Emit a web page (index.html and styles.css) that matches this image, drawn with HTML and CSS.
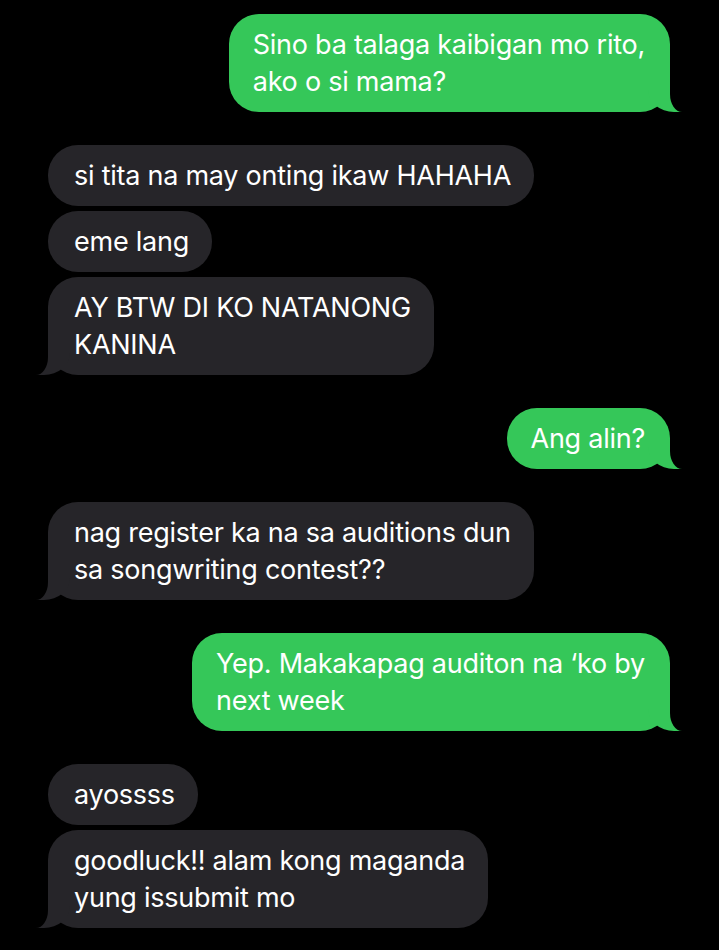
FILE: index.html
```html
<!DOCTYPE html>
<html lang="tl">
<head>
<meta charset="utf-8">
<title>Messages</title>
<link rel="stylesheet" href="styles.css">
</head>
<body>
<main class="thread">
  <section class="group sent">
    <p class="bubble tail">Sino ba talaga kaibigan mo rito,<br>ako o si mama?</p>
  </section>
  <section class="group received">
    <p class="bubble">si tita na may onting ikaw HAHAHA</p>
    <p class="bubble">eme lang</p>
    <p class="bubble tail">AY BTW DI KO NATANONG<br>KANINA</p>
  </section>
  <section class="group sent">
    <p class="bubble tail">Ang alin?</p>
  </section>
  <section class="group received">
    <p class="bubble tail">nag register ka na sa auditions dun<br>sa songwriting contest??</p>
  </section>
  <section class="group sent">
    <p class="bubble tail">Yep. Makakapag auditon na ‘ko by<br>next week</p>
  </section>
  <section class="group received">
    <p class="bubble">ayossss</p>
    <p class="bubble tail">goodluck!! alam kong maganda<br>yung issubmit mo</p>
  </section>
</main>
</body>
</html>
```

FILE: styles.css
```css
html, body {
  margin: 0;
  padding: 0;
  background: #000;
}

body {
  width: 719px;
  height: 950px;
  overflow: hidden;
  font-family: Inter, "Noto Sans", "Liberation Sans", sans-serif;
  -webkit-font-smoothing: antialiased;
}

.thread {
  display: flex;
  flex-direction: column;
  gap: 33px;
  padding: 14px 49px 0 48px;
}

.group {
  display: flex;
  flex-direction: column;
  gap: 5px;
}

.group.sent {
  align-items: flex-end;
}

.group.received {
  align-items: flex-start;
}

.bubble {
  position: relative;
  z-index: 0;
  margin: 0;
  padding: 12px 23px 12px 26px;
  font-size: 27px;
  line-height: 37px;
  letter-spacing: -0.25px;
  color: #fff;
  border-radius: 30px;
  white-space: nowrap;
}

.sent .bubble {
  background: #35c759;
  padding: 12px 25px 12px 24px;
}

.received .bubble {
  background: #262529;
}

/* tails */
.bubble.tail::before,
.bubble.tail::after {
  content: "";
  position: absolute;
  bottom: 0;
  z-index: -1;
}

.sent .bubble.tail::before {
  right: -12px;
  width: 34px;
  height: 30px;
  background: #35c759;
  border-bottom-left-radius: 26px 22px;
}

.sent .bubble.tail::after {
  left: 100%;
  width: 30px;
  height: 32px;
  background: #000;
  border-bottom-left-radius: 12px 18px;
}

.received .bubble.tail::before {
  left: -12px;
  width: 34px;
  height: 30px;
  background: #262529;
  border-bottom-right-radius: 26px 22px;
}

.received .bubble.tail::after {
  right: 100%;
  width: 30px;
  height: 32px;
  background: #000;
  border-bottom-right-radius: 12px 18px;
}
```
